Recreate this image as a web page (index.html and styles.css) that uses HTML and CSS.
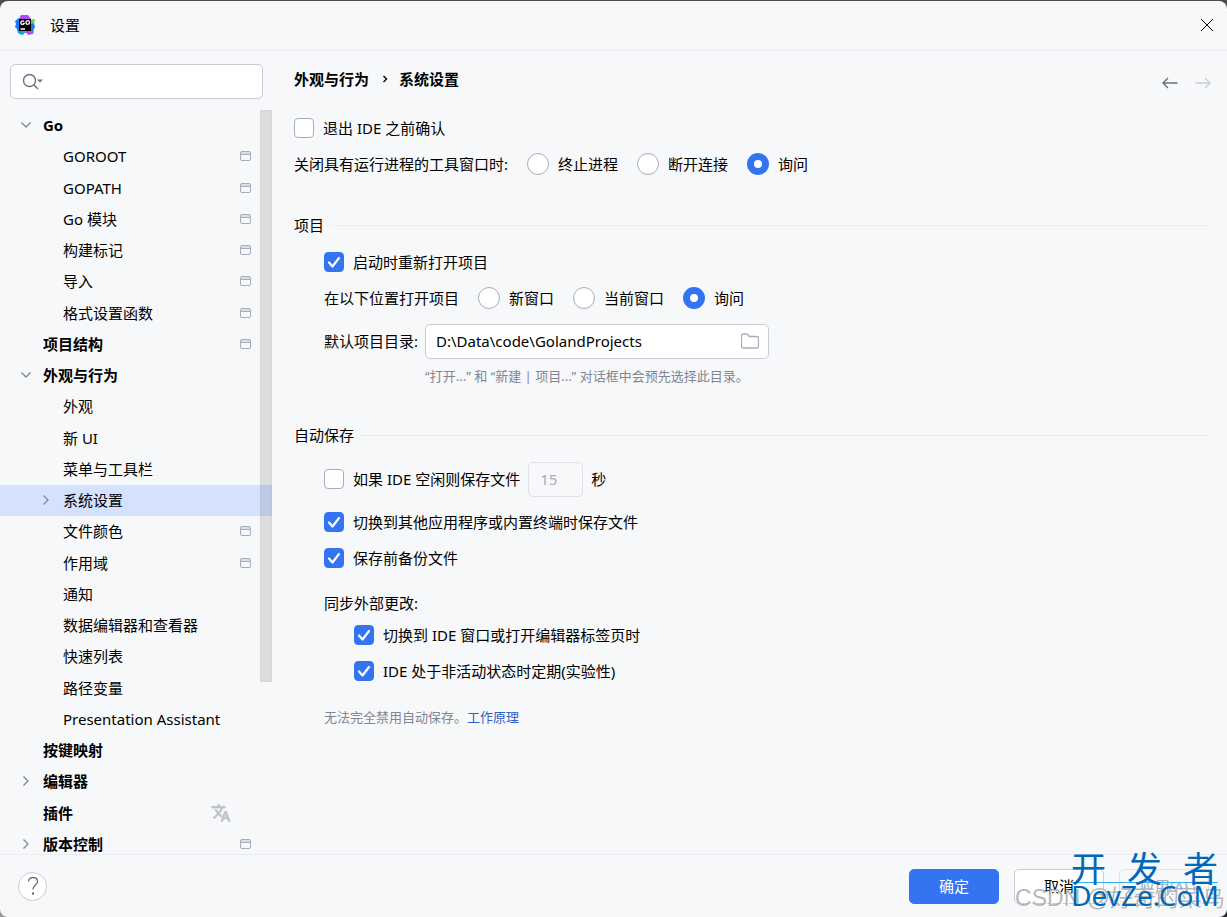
FILE: index.html
```html
<!DOCTYPE html>
<html lang="zh-CN">

<head>
    <meta charset="UTF-8">
    <meta name="viewport" content="width=device-width, initial-scale=1.0">
    <title>设置</title>
    <link rel="stylesheet" href="styles.css">
</head>

<body>
    <svg class="defs" aria-hidden="true">
        <symbol id="i-down" viewBox="0 0 12 12"><path d="M1.500 3.500 6 8l4.500-4.500" /></symbol>
        <symbol id="i-right" viewBox="0 0 12 12"><path d="M3.500 1.500 8 6l-4.500 4.500" /></symbol>
        <symbol id="i-project" viewBox="0 0 12 12">
            <path d="M1 2h10v3H1z" fill="#dcdee9" stroke="none" />
            <rect x=".5" y="1.500" width="10" height="9" rx="1.500" />
            <path d="M1 4.500h10" />
        </symbol>
    </svg>
    <div class="dialog">
        <header class="titlebar">
            <svg class="logo" viewBox="0 0 20 20">
                <path d="M4 4 6 0h7l3 4 1 12-3 3-9-3z" fill="#a94df5" />
                <path d="M0 6l4-3 1 1v12l4 1-1 2-5-1-1-4-2-2 1-3z" fill="#1a7cf9" />
                <path d="M15 5l5-1-1 4-3 3z" fill="#45e645" />
                <path d="M16 9l3-1 1 4-2 4h-3z" fill="#2f6ff0" />
                <path d="M11 16h8l-1 3-5 1z" fill="#b04bf0" />
                <path d="M4 16h7l-3 4-4-1z" fill="#18a8c0" />
                <rect x="4" y="4" width="12" height="12" />
                <g fill="none" stroke="#fff" stroke-width="1.300">
                    <path d="M9 6.500a1.800 1.800 0 1 0 .2 2H8" />
                    <circle cx="12.700" cy="7.500" r="1.800" />
                    <path d="M5.500 14H10" />
                </g>
            </svg>
            <h1>设置</h1>
            <button class="icon-button close" aria-label="关闭">
                <svg viewBox="0 0 12 12"><path d="M0 0l12 12M12 0 0 12" /></svg>
            </button>
        </header>

        <div class="body">
            <aside class="sidebar">
                <label class="search">
                    <svg viewBox="0 0 22 18">
                        <circle cx="7.500" cy="7.500" r="6" />
                        <path d="M12 12l4 4" />
                        <path class="caret" d="M15 6.500h6l-3 3z" />
                    </svg>
                    <input type="text" aria-label="搜索">
                </label>
                <nav class="tree">
                    <ul>
                        <li class="group"><svg class="arrow"><use href="#i-down" /></svg><a href="#">Go</a></li>
                        <li><a href="#">GOROOT</a><svg class="mark"><use href="#i-project" /></svg></li>
                        <li><a href="#">GOPATH</a><svg class="mark"><use href="#i-project" /></svg></li>
                        <li><a href="#">Go 模块</a><svg class="mark"><use href="#i-project" /></svg></li>
                        <li><a href="#">构建标记</a><svg class="mark"><use href="#i-project" /></svg></li>
                        <li><a href="#">导入</a><svg class="mark"><use href="#i-project" /></svg></li>
                        <li><a href="#">格式设置函数</a><svg class="mark"><use href="#i-project" /></svg></li>
                        <li class="group"><a href="#">项目结构</a><svg class="mark"><use href="#i-project" /></svg></li>
                        <li class="group"><svg class="arrow"><use href="#i-down" /></svg><a href="#">外观与行为</a></li>
                        <li><a href="#">外观</a></li>
                        <li><a href="#">新 UI</a></li>
                        <li><a href="#">菜单与工具栏</a></li>
                        <li class="active"><svg class="arrow"><use href="#i-right" /></svg><a href="#">系统设置</a></li>
                        <li><a href="#">文件颜色</a><svg class="mark"><use href="#i-project" /></svg></li>
                        <li><a href="#">作用域</a><svg class="mark"><use href="#i-project" /></svg></li>
                        <li><a href="#">通知</a></li>
                        <li><a href="#">数据编辑器和查看器</a></li>
                        <li><a href="#">快速列表</a></li>
                        <li><a href="#">路径变量</a></li>
                        <li><a href="#">Presentation Assistant</a></li>
                        <li class="group"><a href="#">按键映射</a></li>
                        <li class="group"><svg class="arrow"><use href="#i-right" /></svg><a href="#">编辑器</a></li>
                        <li class="group"><a href="#">插件</a>
                            <svg class="translate" viewBox="0 0 24 24"><path d="M12.870 15.070l-2.540-2.510.03-.03A17.520 17.520 0 0 0 14.070 6H17V4h-7V2H8v2H1v2h11.170C11.500 7.920 10.440 9.750 9 11.350 8.070 10.320 7.300 9.190 6.690 8h-2c.73 1.630 1.730 3.170 2.980 4.560l-5.090 5.020L4 19l5-5 3.110 3.110.76-2.040zM18.500 10h-2L12 22h2l1.120-3h4.750L21 22h2l-4.500-12zm-2.620 7l1.620-4.330L19.120 17h-3.240z" /></svg>
                        </li>
                        <li class="group"><svg class="arrow"><use href="#i-right" /></svg><a href="#">版本控制</a><svg class="mark"><use href="#i-project" /></svg></li>
                    </ul>
                    <div class="scrollbar"></div>
                </nav>
            </aside>

            <main class="content">
                <div class="crumbs">
                    <h2>外观与行为</h2>
                    <svg class="sep" viewBox="0 0 6 10"><path d="M1.500 2 4.500 5l-3 3" /></svg>
                    <h2>系统设置</h2>
                    <button class="icon-button back" aria-label="后退">
                        <svg viewBox="0 0 16 12"><path d="M15.500 6H1M6 1 1 6l5 5" /></svg>
                    </button>
                    <button class="icon-button forward" aria-label="前进" disabled>
                        <svg viewBox="0 0 16 12"><path d="M.5 6H15M10 1l5 5-5 5" /></svg>
                    </button>
                </div>

                <div class="row">
                    <label><input type="checkbox">退出 IDE 之前确认</label>
                </div>
                <div class="row options">
                    <span>关闭具有运行进程的工具窗口时:</span>
                    <label><input type="radio" name="close">终止进程</label>
                    <label><input type="radio" name="close">断开连接</label>
                    <label><input type="radio" name="close" checked>询问</label>
                </div>

                <section>
                    <h3>项目</h3>
                    <div class="row">
                        <label><input type="checkbox" checked>启动时重新打开项目</label>
                    </div>
                    <div class="row options">
                        <span>在以下位置打开项目</span>
                        <label><input type="radio" name="open">新窗口</label>
                        <label><input type="radio" name="open">当前窗口</label>
                        <label><input type="radio" name="open" checked>询问</label>
                    </div>
                    <div class="directory">
                        <label for="dir">默认项目目录:</label>
                        <div class="field">
                            <input type="text" id="dir" value="D:\Data\code\GolandProjects">
                            <button class="icon-button browse" aria-label="浏览">
                                <svg viewBox="0 0 18 16"><path d="M.5 3A2 2 0 0 1 2.500 1H6l2.500 2.500h7a2 2 0 0 1 2 2V13a2 2 0 0 1-2 2h-13a2 2 0 0 1-2-2z" /></svg>
                            </button>
                        </div>
                        <p class="hint">“打开...” 和 “新建 | 项目...” 对话框中会预先选择此目录。</p>
                    </div>
                </section>

                <section>
                    <h3>自动保存</h3>
                    <div class="row tall">
                        <label><input type="checkbox">如果 IDE 空闲则保存文件</label>
                        <input class="seconds" type="text" value="15" aria-label="秒" disabled>
                        <span>秒</span>
                    </div>
                    <div class="row">
                        <label><input type="checkbox" checked>切换到其他应用程序或内置终端时保存文件</label>
                    </div>
                    <div class="row">
                        <label><input type="checkbox" checked>保存前备份文件</label>
                    </div>
                    <div class="sync">
                        <h4>同步外部更改:</h4>
                        <div class="row">
                            <label><input type="checkbox" checked>切换到 IDE 窗口或打开编辑器标签页时</label>
                        </div>
                        <div class="row">
                            <label><input type="checkbox" checked>IDE 处于非活动状态时定期(实验性)</label>
                        </div>
                    </div>
                    <p class="hint note">无法完全禁用自动保存。<a href="#">工作原理</a></p>
                </section>
            </main>
        </div>

        <footer class="actions">
            <button class="help" aria-label="帮助">
                <svg viewBox="0 0 12 20"><path d="M1.500 5.500C1.500 3 3.300 1.500 6 1.500s4.500 1.600 4.500 4c0 3.500-4.500 3.700-4.500 8" /><circle cx="6" cy="17.500" r=".6" /></svg>
            </button>
            <button class="primary">确定</button>
            <button>取消</button>
            <button disabled>应用(A)</button>
        </footer>
        <div class="author-mark">CSDN @好奇的菜鸟</div>
        <div class="site-mark">
            <div class="site-name"><span>开</span><span>发</span><span>者</span></div>
            <div class="site-url">DevZe.CoM</div>
        </div>
    </div>
</body>

</html>
```
FILE: styles.css
```css
* {
    box-sizing: border-box;
    margin: 0;
    padding: 0;
}

body {
    height: 100vh;
    padding-top: 1px;
    background: linear-gradient(#4f4a4c 20px, transparent 20px), linear-gradient(90deg, #9a9896, #2c2b30);
    color: #000;
    font: 15px/20px "Noto Sans", "Noto Sans CJK SC", sans-serif;
}

button,
input {
    font: inherit;
    color: inherit;
}

h1,
h3,
h4 {
    font-size: 15px;
    font-weight: normal;
}

h2 {
    font-size: 15px;
}

a {
    color: inherit;
    text-decoration: none;
}

svg {
    flex: none;
    fill: none;
    stroke: #6c707e;
}

.defs {
    display: none;
}

.dialog {
    position: relative;
    display: flex;
    flex-direction: column;
    height: 100%;
    overflow: hidden;
    background: #f7f8fa;
    border-radius: 8px;
}

.icon-button {
    display: flex;
    border: none;
    background: none;
}

/* title bar */

.titlebar {
    display: flex;
    flex: none;
    align-items: center;
    height: 50px;
    padding: 0 14px 1px 15px;
    border-bottom: 1px solid #ebecf0;
}

.logo {
    width: 20px;
    height: 20px;
    margin-right: 15px;
    stroke: none;
    fill: #000;
}

.close {
    margin-left: auto;
}

.close svg {
    width: 12px;
    height: 12px;
    stroke: #000;
    overflow: visible;
}

/* sidebar */

.body {
    display: flex;
    flex: 1;
    min-height: 0;
}

.sidebar {
    display: flex;
    flex: none;
    flex-direction: column;
    width: 272px;
}

.search {
    display: flex;
    flex: none;
    align-items: center;
    height: 35px;
    margin: 13px 9px 11px 10px;
    padding: 0 11px;
    border: 1px solid #c9ccd6;
    border-radius: 5px;
    background: #fff;
}

.search svg {
    width: 22px;
    height: 18px;
    stroke-width: 1.4;
}

.search .caret {
    fill: #6c707e;
    stroke: none;
}

.search input {
    flex: 1;
    min-width: 0;
    border: none;
    outline: none;
}

.tree {
    position: relative;
    flex: 1;
    min-height: 0;
    overflow: hidden;
}

.tree ul {
    display: grid;
    grid-auto-rows: 1fr;
    height: 750px;
    list-style: none;
}

.tree li {
    display: flex;
    align-items: center;
    padding: 0 20px 1px 63px;
}

.tree .group {
    padding-left: 43px;
    font-weight: bold;
}

.tree .active {
    background: #d4e2ff;
}

.arrow {
    width: 12px;
    height: 12px;
    margin: 0 11px 0 -23px;
    stroke: #818594;
    stroke-width: 1.3;
}

.mark {
    width: 12px;
    height: 12px;
    margin-left: auto;
    stroke: #a8adbd;
}

.translate {
    width: 20px;
    height: 20px;
    margin: 0 21px 0 auto;
    fill: #bfc2c6;
    stroke: #bfc2c6;
}

.scrollbar {
    position: absolute;
    top: 0;
    right: 0;
    width: 12px;
    height: 572px;
    background: rgba(0, 0, 0, 0.11);
    border: 1px solid rgba(0, 0, 0, 0.02);
}

/* settings page */

.content {
    flex: 1;
    min-width: 0;
    padding: 0 19px 0 22px;
}

.crumbs {
    display: flex;
    align-items: center;
    height: 59px;
    padding-bottom: 4px;
}

.sep {
    width: 6px;
    height: 10px;
    margin: 0 11px 0 13px;
    stroke: #000;
    stroke-width: 1.4;
}

.back,
.forward {
    margin-top: 8px;
}

.back {
    margin-left: auto;
    margin-right: 17px;
}

.forward {
    margin-right: -3px;
}

.back svg,
.forward svg {
    width: 16px;
    height: 12px;
    stroke-width: 1.4;
}

.forward svg {
    stroke: #c9ccd6;
}

.row {
    display: flex;
    align-items: center;
    gap: 8px;
    height: 36px;
}

.row.tall {
    height: 50px;
}

.row label {
    display: flex;
    align-items: center;
    gap: 9px;
}

.row.options {
    gap: 19px;
}

section {
    padding-left: 30px;
    margin-top: 31px;
}

section + section {
    margin-top: 37px;
}

h3 {
    display: flex;
    align-items: center;
    gap: 7px;
    height: 24px;
    margin: 0 0 7px -30px;
}

h3::after {
    content: "";
    flex: 1;
    height: 1px;
    background: #ebecf0;
}

input[type="checkbox"],
input[type="radio"] {
    appearance: none;
    flex: none;
    width: 20px;
    height: 20px;
    border: 1px solid #a8adbd;
    border-radius: 4px;
    background: #fff;
}

input[type="radio"] {
    width: 22px;
    height: 22px;
    border-radius: 50%;
}

input[type="checkbox"]:checked {
    border-color: #3574f0;
    background: #3574f0 url("data:image/svg+xml,%3Csvg xmlns='http://www.w3.org/2000/svg' viewBox='0 0 18 18'%3E%3Cpath d='M4 9.500l3.500 4L14 5' fill='none' stroke='white' stroke-width='2.200' stroke-linecap='round' stroke-linejoin='round'/%3E%3C/svg%3E");
}

input[type="radio"]:checked {
    border: 7px solid #3574f0;
}

.directory {
    display: grid;
    grid-template-columns: auto 1fr;
    grid-template-rows: 50px 20px;
    align-items: center;
    column-gap: 7px;
}

.directory .hint {
    grid-column: 2;
}

.field {
    display: flex;
    align-items: center;
    width: 344px;
    height: 35px;
    padding: 0 9px 1px 10px;
    border: 1px solid #c9ccd6;
    border-radius: 5px;
    background: #fff;
}

.field input {
    flex: 1;
    min-width: 0;
    border: none;
    outline: none;
}

.browse svg {
    width: 18px;
    height: 16px;
    stroke: #a8adbd;
    stroke-width: 1.3;
}

.seconds {
    width: 55px;
    height: 35px;
    padding: 0 11px;
    border: 1px solid #dfe1e5;
    border-radius: 5px;
    background: #f7f8fa;
    color: #a8adbd;
}

.sync {
    margin-top: 13px;
    padding-left: 30px;
}

.sync h4 {
    margin-left: -30px;
    line-height: 28px;
}

.hint {
    color: #818594;
    font-size: 13px;
}

.note {
    margin-top: 18px;
}

.note a {
    color: #315fbd;
}

/* footer */

.actions {
    display: flex;
    flex: none;
    align-items: center;
    gap: 15px;
    height: 63px;
    padding: 0 18px;
    border-top: 1px solid #ebecf0;
}

.actions button {
    width: 90px;
    height: 35px;
    border: 1px solid #c9ccd6;
    border-radius: 5px;
    background: #fff;
}

.actions button:disabled {
    border-color: #dfe1e5;
    background: none;
    color: #a8adbd;
}

.actions .primary {
    border-color: #3574f0;
    background: #3574f0;
    color: #fff;
}

.actions .help {
    display: flex;
    align-items: center;
    justify-content: center;
    width: 29px;
    height: 29px;
    margin-right: auto;
    border-radius: 50%;
}

.help svg {
    width: 12px;
    height: 20px;
    stroke-width: 1.3;
}

/* watermarks over the corner */

.author-mark {
    position: absolute;
    right: 2px;
    bottom: 5px;
    color: rgba(150, 152, 158, 0.7);
    font: 23px/28px "Liberation Sans", "Noto Sans CJK SC", sans-serif;
    text-shadow: 1px 1px #fff;
    white-space: nowrap;
}

.site-mark {
    position: absolute;
    right: 9px;
    bottom: 9px;
    width: 147px;
    color: #0068b7;
}

.site-name {
    display: flex;
    justify-content: space-between;
    border-bottom: 1px solid #36b0ee;
    font-size: 35px;
    line-height: 27px;
}

.site-url {
    font-size: 28px;
    line-height: 25px;
}
```
